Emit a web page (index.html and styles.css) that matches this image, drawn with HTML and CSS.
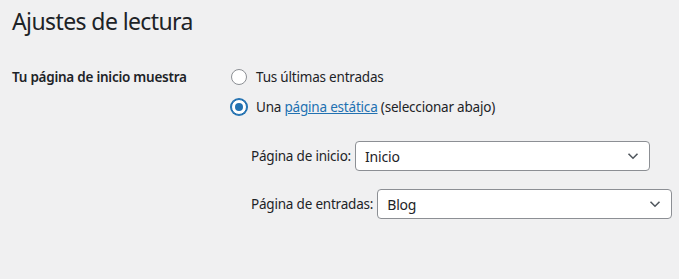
FILE: index.html
```html
<!DOCTYPE html>
<html lang="es">
<head>
<meta charset="utf-8">
<title>Ajustes de lectura</title>
<link rel="stylesheet" href="styles.css">
</head>
<body>
<div class="wrap">
  <h1 class="title">Ajustes de lectura</h1>
  <div class="row">
    <div class="th">Tu página de inicio muestra</div>
    <div class="td">
      <label class="radio-line">
        <span class="radio"></span>
        <span>Tus últimas entradas</span>
      </label>
      <label class="radio-line">
        <span class="radio checked"></span>
        <span>Una <a href="#" class="link">página estática</a> (seleccionar abajo)</span>
      </label>
      <div class="subs">
        <div class="sub">
          <span class="sub-label">Página de inicio:</span>
          <div class="select"><span>Inicio</span><svg class="chev" width="16" height="16" viewBox="0 0 16 16"><path d="M3.5 5.8 L8 10.2 L12.5 5.8" fill="none" stroke="#50575e" stroke-width="1.6"/></svg></div>
        </div>
        <div class="sub">
          <span class="sub-label">Página de entradas:</span>
          <div class="select"><span>Blog</span><svg class="chev" width="16" height="16" viewBox="0 0 16 16"><path d="M3.5 5.8 L8 10.2 L12.5 5.8" fill="none" stroke="#50575e" stroke-width="1.6"/></svg></div>
        </div>
      </div>
    </div>
  </div>
</div>
</body>
</html>
```
FILE: styles.css
```css
* { box-sizing: border-box; }
html, body { margin: 0; padding: 0; }
body {
  background: #f0f0f1;
  color: #1d2327;
  font-family: "Noto Sans", "Open Sans", sans-serif;
  font-size: 13.5px;
  width: 679px;
  height: 279px;
  overflow: hidden;
}
.wrap { padding: 0 0 0 12px; }
.title {
  margin: 0;
  padding: 6px 0 0 0;
  font-size: 23px;
  font-weight: 400;
  line-height: 30px;
  letter-spacing: -0.6px;
}
.row {
  display: flex;
  margin-top: 31px;
}
.th {
  width: 219px;
  flex: none;
  font-weight: 600;
  font-size: 13.5px;
  line-height: 20px;
  letter-spacing: -0.25px;
}
.td { flex: 1; }
.radio-line {
  display: flex;
  align-items: center;
  gap: 9px;
  height: 20px;
  margin-bottom: 10px;
  line-height: 20px;
  letter-spacing: -0.2px;
}
.radio {
  width: 16px;
  height: 16px;
  border: 1px solid #8c8f94;
  border-radius: 50%;
  background: #fff;
  flex: none;
  display: flex;
  align-items: center;
  justify-content: center;
}
.radio.checked {
  border-color: #2271b1;
  box-shadow: 0 0 0 1px #2271b1;
}
.radio.checked::after {
  content: "";
  width: 8px;
  height: 8px;
  border-radius: 50%;
  background: #2271b1;
}
.link { color: #2271b1; text-decoration: underline; }
.subs {
  padding-left: 20px;
  padding-top: 14px;
  display: flex;
  flex-direction: column;
  gap: 18px;
}
.sub {
  display: flex;
  align-items: center;
  gap: 4px;
  letter-spacing: -0.2px;
}
.select {
  width: 295px;
  height: 30px;
  border: 1px solid #8c8f94;
  border-radius: 4px;
  background: #fff;
  display: flex;
  align-items: center;
  justify-content: space-between;
  padding: 0 8px 0 9px;
  font-size: 14px;
}
.chev { flex: none; }
```
